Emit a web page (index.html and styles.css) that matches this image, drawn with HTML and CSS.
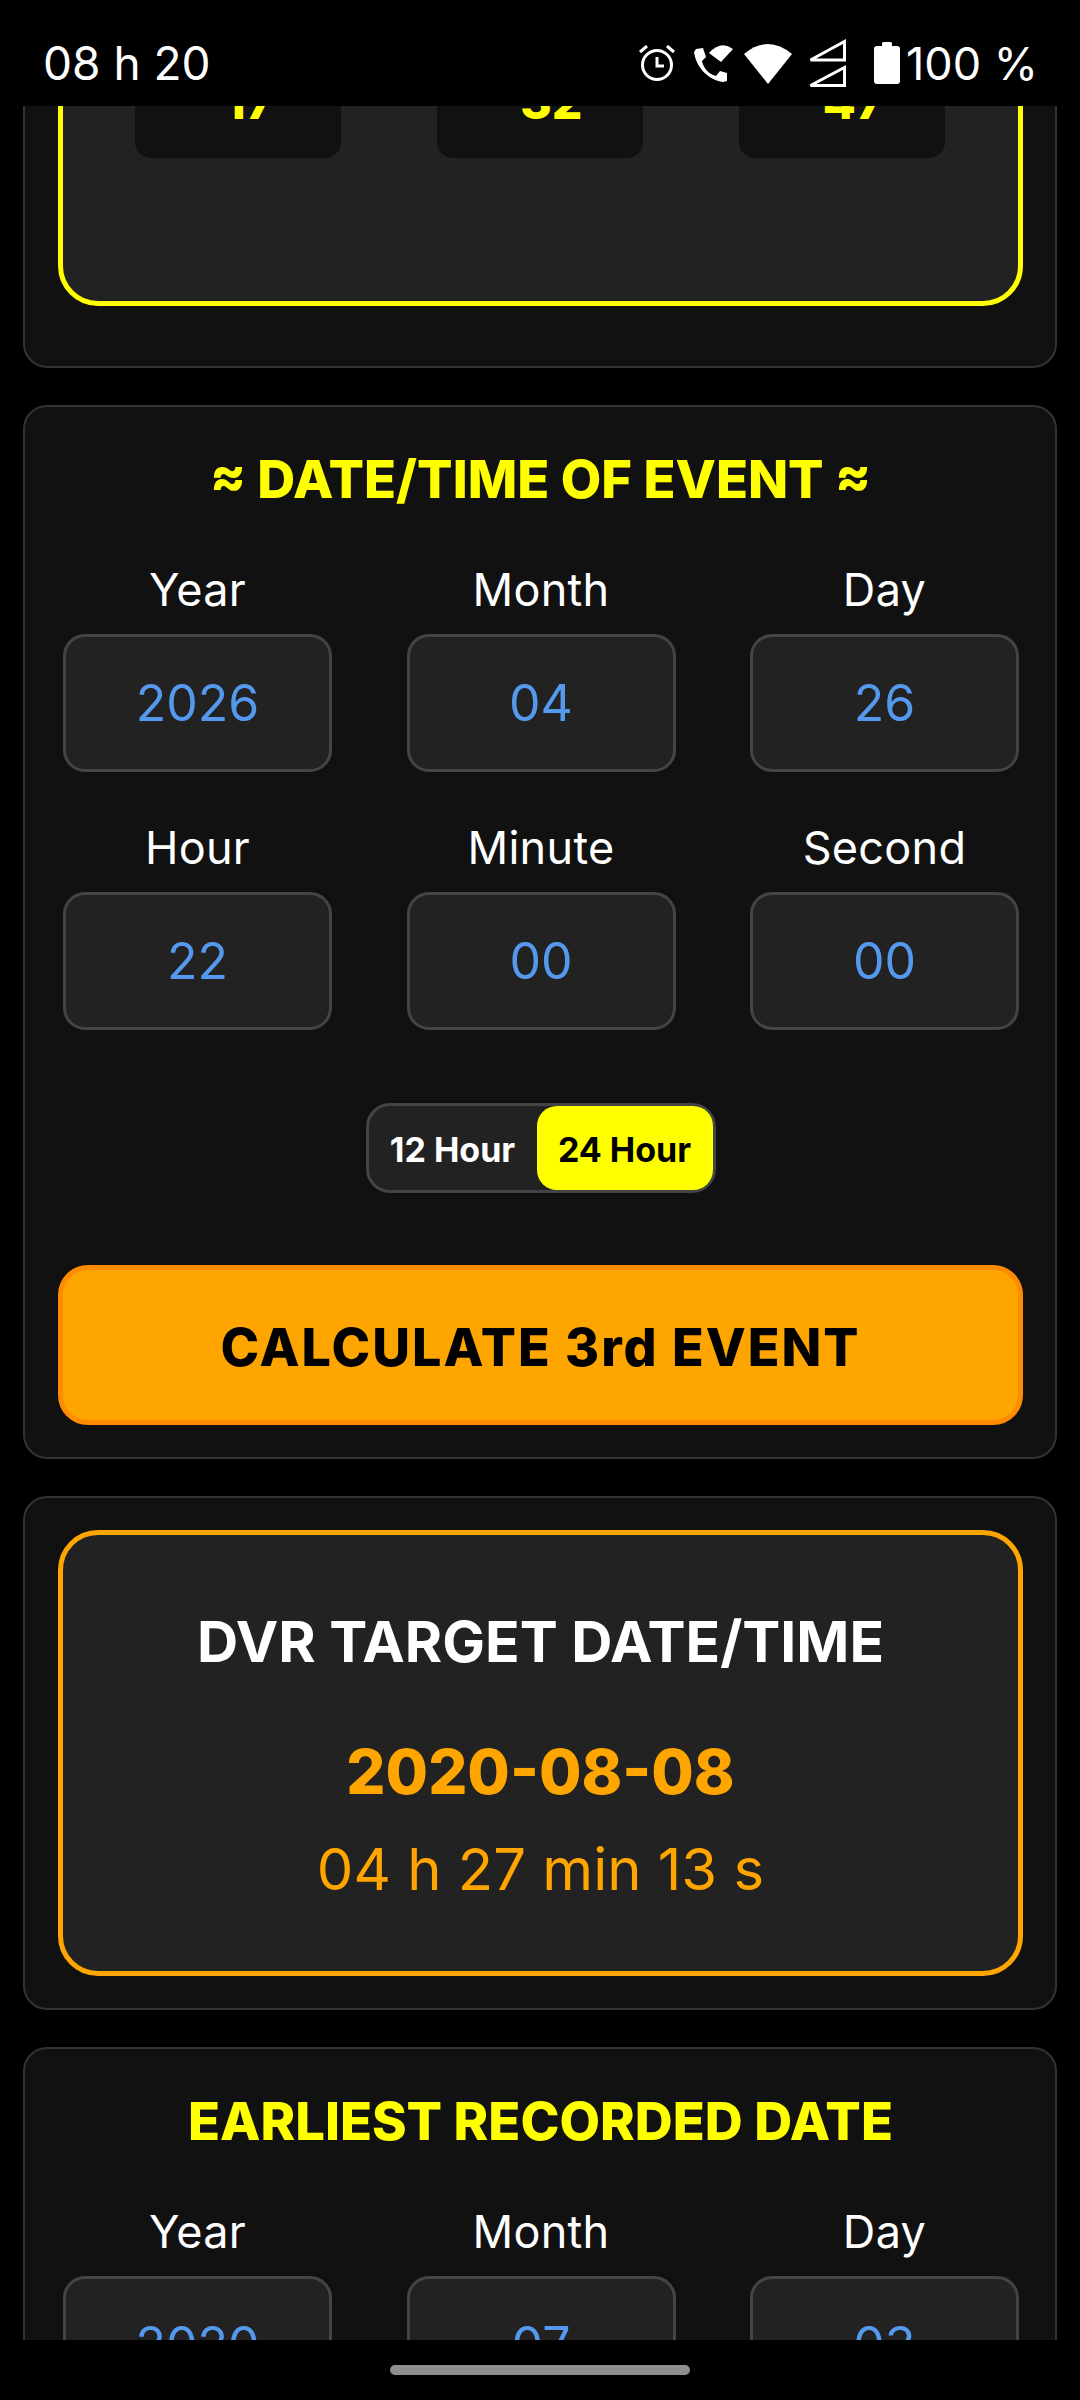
FILE: index.html
```html
<!DOCTYPE html>
<html lang="en">
<head>
    <meta charset="UTF-8">
    <meta name="viewport" content="width=device-width, initial-scale=1.0">
    <title>DVR Event Calculator</title>
    <link rel="stylesheet" href="styles.css">
</head>
<body>
    <div class="status-bar">
        <div class="clock">08 h 20</div>
        <div class="status-icons">
            <svg class="ic-alarm" width="36" height="36" viewBox="0 0 36 36">
                <circle cx="18" cy="20" r="14.500" fill="none" stroke="#fff" stroke-width="3"/>
                <path d="M18 12v9h7" fill="none" stroke="#fff" stroke-width="3"/>
                <path d="M1 7l7-6M35 7l-7-6" fill="none" stroke="#fff" stroke-width="3"/>
            </svg>
            <svg class="ic-call" width="40" height="40" viewBox="0 0 40 40">
                <path d="M15 10Q27-3 39 6L27 19z" fill="#fff"/>
                <path d="M2 6l7-1 3 9-4 4c1 6 6 13 14 15l4-5 7 2v8l-4 1C14 37 2 24 0 9z" fill="#fff"/>
            </svg>
            <svg class="ic-wifi" width="50" height="42" viewBox="0 0 50 42">
                <path d="M25 42L1 12Q25-8 49 12z" fill="#fff"/>
            </svg>
            <svg class="ic-signal" width="38" height="48" viewBox="0 0 38 48">
                <path d="M36.500 2.500V21H2.500z" fill="none" stroke="#fff" stroke-width="3"/>
                <path d="M36.500 28.500V46.500H2.500z" fill="none" stroke="#fff" stroke-width="3"/>
            </svg>
            <svg class="ic-battery" width="26" height="42" viewBox="0 0 26 42">
                <path d="M8 4V1.500Q8 0 9.500 0h7Q18 0 18 1.500V4h5q3 0 3 3v32q0 3-3 3H3q-3 0-3-3V7q0-3 3-3z" fill="#fff"/>
            </svg>
            <span class="battery-text">100 %</span>
        </div>
    </div>

    <div class="scroll-area">
        <div class="cards">
            <div class="card card-offsets">
                <div class="panel panel-yellow">
                    <div class="offset-row">
                        <div class="offset-box">-17</div>
                        <div class="offset-box">-32</div>
                        <div class="offset-box">-47</div>
                    </div>
                </div>
            </div>

            <div class="card">
                <div class="card-title">≈ DATE/TIME OF EVENT ≈</div>
                <div class="fields">
                    <div class="field"><div class="field-label">Year</div><div class="field-input">2026</div></div>
                    <div class="field"><div class="field-label">Month</div><div class="field-input">04</div></div>
                    <div class="field"><div class="field-label">Day</div><div class="field-input">26</div></div>
                    <div class="field"><div class="field-label">Hour</div><div class="field-input">22</div></div>
                    <div class="field"><div class="field-label">Minute</div><div class="field-input">00</div></div>
                    <div class="field"><div class="field-label">Second</div><div class="field-input">00</div></div>
                </div>
                <div class="toggle-wrap">
                    <div class="toggle">
                        <div class="toggle-opt">12 Hour</div>
                        <div class="toggle-opt active">24 Hour</div>
                    </div>
                </div>
                <button class="calc-btn">CALCULATE 3rd EVENT</button>
            </div>

            <div class="card">
                <div class="panel panel-orange">
                    <div class="result-title">DVR TARGET DATE/TIME</div>
                    <div class="result-date">2020-08-08</div>
                    <div class="result-time">04 h 27 min 13 s</div>
                </div>
            </div>

            <div class="card">
                <div class="card-title">EARLIEST RECORDED DATE</div>
                <div class="fields">
                    <div class="field"><div class="field-label">Year</div><div class="field-input">2020</div></div>
                    <div class="field"><div class="field-label">Month</div><div class="field-input">07</div></div>
                    <div class="field"><div class="field-label">Day</div><div class="field-input">03</div></div>
                </div>
            </div>
        </div>
    </div>

    <div class="nav-bar">
        <div class="nav-pill"></div>
    </div>
</body>
</html>
```

FILE: styles.css
```css
* {
    box-sizing: border-box;
}
body {
    margin: 0;
    width: 1080px;
    height: 2400px;
    overflow: hidden;
    display: flex;
    flex-direction: column;
    background-color: #000;
    color: #fff;
    font-family: Inter, "Noto Sans", sans-serif;
}

/* status bar */
.status-bar {
    height: 106px;
    flex: none;
    display: flex;
    justify-content: space-between;
    align-items: center;
    padding: 20px 42px 0 43px;
    font-size: 46px;
    background-color: #000;
}
.status-icons {
    display: flex;
    align-items: center;
}
.ic-alarm {
    margin-right: 19px;
}
.ic-call {
    margin-right: 9px;
}
.ic-wifi {
    margin-right: 15px;
}
.ic-signal {
    margin-right: 28px;
}
.ic-battery {
    margin-right: 6px;
}
.battery-text {
    font-size: 45px;
}

/* scrolling content */
.scroll-area {
    flex: 1;
    overflow: hidden;
}
.cards {
    display: flex;
    flex-direction: column;
    gap: 37px;
    padding: 0 23px;
    margin-top: -159px;
}
.card {
    background-color: #111;
    border: 2px solid #333;
    border-radius: 24px;
    padding: 32px 32px 32px 33px;
}
.card-offsets {
    padding-bottom: 60px;
}
.card-title {
    color: #ff0;
    font-size: 52.500px;
    font-weight: 800;
    text-align: center;
    line-height: 80px;
    margin-bottom: 41px;
}
.panel {
    background-color: #222;
    border-radius: 40px;
}
.panel-yellow {
    border: 5px solid #ff0;
    height: 325px;
}
.panel-orange {
    border: 5px solid #ffa500;
    height: 446px;
    padding-top: 72px;
    text-align: center;
}

/* first card, scrolled partly off screen */
.offset-row {
    display: flex;
    justify-content: space-between;
    padding: 0 73px 0 72px;
}
.offset-box {
    width: 206px;
    height: 172px;
    padding-top: 86px;
    background-color: #111;
    border-radius: 16px;
    color: #ff0;
    font-size: 48px;
    font-weight: 800;
    line-height: 60px;
    text-align: center;
}

/* date fields */
.fields {
    display: grid;
    grid-template-columns: repeat(3, 269px);
    justify-content: space-between;
    row-gap: 46px;
    padding: 0 4px 0 5px;
}
.field-label {
    font-size: 45px;
    letter-spacing: 0.3px;
    line-height: 60px;
    text-align: center;
    margin-bottom: 14px;
}
.field-input {
    height: 138px;
    background-color: #222;
    border: 3px solid #444;
    border-radius: 22px;
    color: #5599ee;
    font-size: 50px;
    display: flex;
    align-items: center;
    justify-content: center;
}

/* 12/24 switch */
.toggle-wrap {
    display: flex;
    justify-content: center;
    margin-top: 73px;
}
.toggle {
    width: 350px;
    height: 90px;
    display: flex;
    align-items: stretch;
    justify-content: space-between;
    background-color: #222;
    border: 3px solid #444;
    border-radius: 24px;
    font-size: 34px;
    font-weight: 700;
}
.toggle-opt {
    width: 168px;
    padding-top: 2px;
    display: flex;
    align-items: center;
    justify-content: center;
    border-radius: 20px;
}
.toggle-opt.active {
    width: 176px;
    background-color: #ff0;
    color: #000;
}

/* calculate button */
.calc-btn {
    display: block;
    width: 100%;
    height: 160px;
    margin-top: 72px;
    padding-top: 5px;
    background-color: #ffa500;
    border: 5px solid #ff8c00;
    border-radius: 30px;
    color: #000;
    font-family: inherit;
    font-size: 52px;
    font-weight: 800;
    letter-spacing: 2px;
}

/* result panel */
.result-title {
    font-size: 57px;
    font-weight: 700;
    line-height: 70px;
}
.result-date {
    color: #ffa500;
    font-size: 61.500px;
    font-weight: 800;
    line-height: 80px;
    margin-top: 55px;
}
.result-time {
    color: #ffa500;
    font-size: 58px;
    line-height: 70px;
    margin-top: 22px;
}

/* navigation bar */
.nav-bar {
    height: 60px;
    flex: none;
    display: flex;
    justify-content: center;
    padding-top: 25px;
    background-color: #000;
}
.nav-pill {
    width: 300px;
    height: 10px;
    border-radius: 5px;
    background-color: #8e8e8e;
}
```
